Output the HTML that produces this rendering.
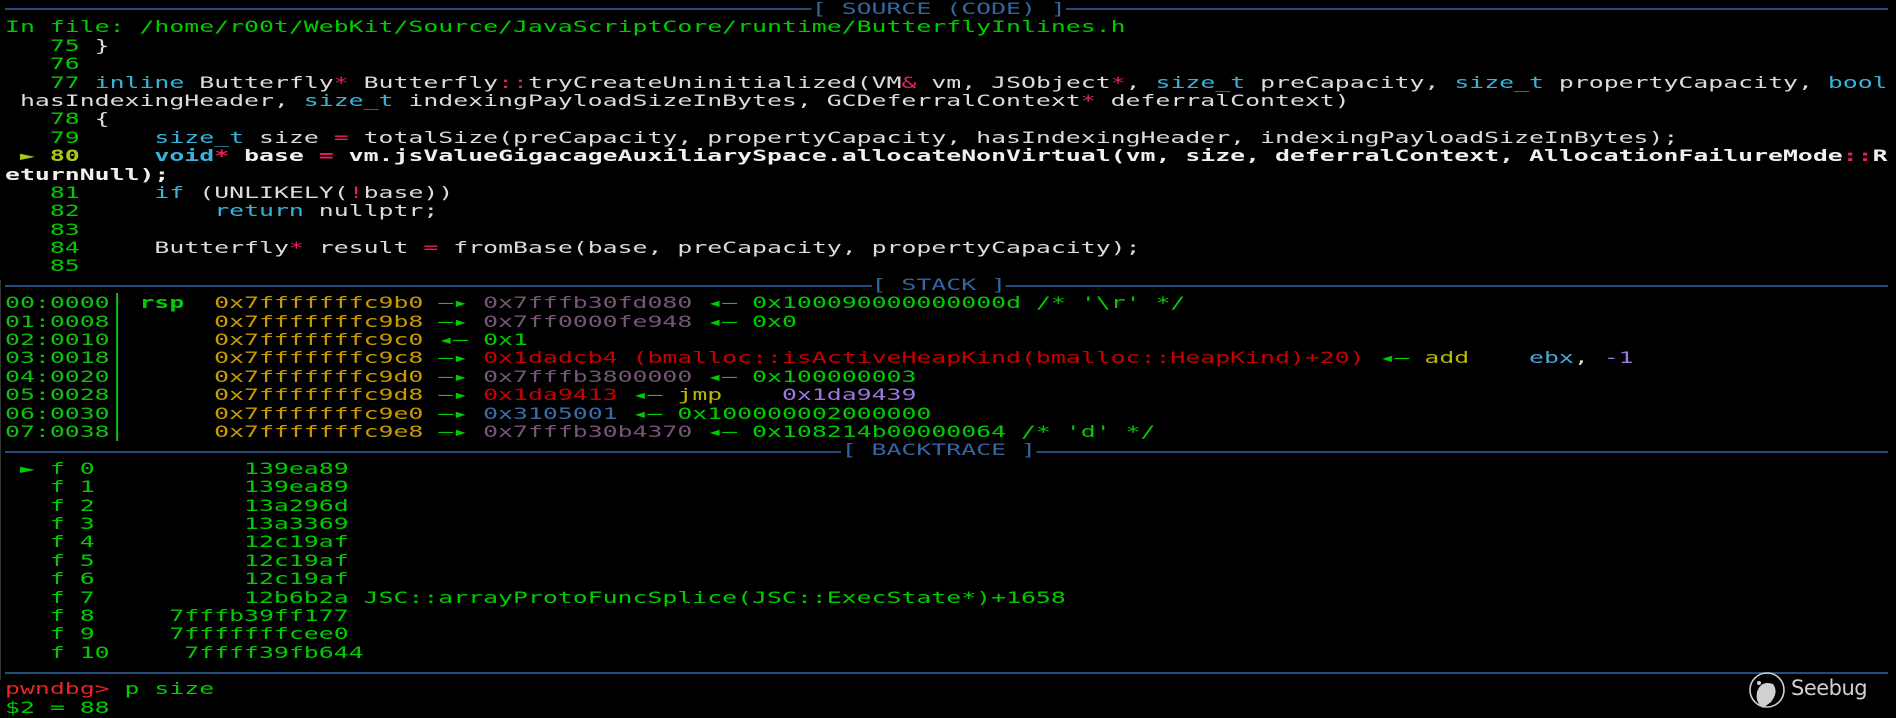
<!DOCTYPE html>
<html><head><meta charset="utf-8">
<style>
html,body{margin:0;padding:0;background:#000;}
body{width:1896px;height:718px;overflow:hidden;position:relative;}
.hl{position:absolute;left:5px;width:1883px;height:2px;background:#284a78;}
#w{position:absolute;left:5px;top:0;transform:scaleX(1.551);transform-origin:0 0;font-family:"DejaVu Sans Mono","Liberation Mono",monospace;font-size:16px;color:#dcdcdc;z-index:2;}
.r{height:18.4px;line-height:18.4px;white-space:pre;}
.lab{background:#000;color:#3565a0;}
.g{color:#00cc00}.gn{color:#10c010}.c{color:#38b4dc}.p{color:#e8205a}.y{color:#a8c818}
.b{font-weight:bold;color:#f0f0f0}
.ad{color:#c89a00}.hp{color:#765676}.rd{color:#c80000}.yl{color:#b8b800}.lv{color:#9a78dc}.bl{color:#3a6ea8}.cy{color:#4aa8d8}
.pr{color:#ee2222}
</style></head><body>
<div class="hl" style="top:8.2px"></div>
<div class="hl" style="top:285.2px"></div>
<div class="hl" style="top:450.8px"></div>
<div class="hl" style="top:671.6px"></div>
<div style="position:absolute;left:0;top:280px;width:1px;height:400px;background:#333"></div>
<div id="w">
<div class="r">                                                      <span class="lab">[ SOURCE (CODE) ]</span></div>
<div class="r g">In file: /home/r00t/WebKit/Source/JavaScriptCore/runtime/ButterflyInlines.h</div>
<div class="r"><span class="g">   75</span> }</div>
<div class="r"><span class="g">   76</span></div>
<div class="r"><span class="g">   77</span> <span class="c">inline</span> Butterfly<span class="p">*</span> Butterfly<span class="p">::</span>tryCreateUninitialized(VM<span class="p">&amp;</span> vm, JSObject<span class="p">*</span>, <span class="c">size_t</span> preCapacity, <span class="c">size_t</span> propertyCapacity, <span class="c">bool</span></div>
<div class="r"> hasIndexingHeader, <span class="c">size_t</span> indexingPayloadSizeInBytes, GCDeferralContext<span class="p">*</span> deferralContext)</div>
<div class="r"><span class="g">   78</span> {</div>
<div class="r"><span class="g">   79</span>     <span class="c">size_t</span> size <span class="p">=</span> totalSize(preCapacity, propertyCapacity, hasIndexingHeader, indexingPayloadSizeInBytes);</div>
<div class="r b"><span class="y"> ► 80</span>     <span class="c">void</span><span class="p">*</span> base <span class="p">=</span> vm.jsValueGigacageAuxiliarySpace.allocateNonVirtual(vm, size, deferralContext, AllocationFailureMode<span class="p">::</span>R</div>
<div class="r b">eturnNull);</div>
<div class="r"><span class="g">   81</span>     <span class="c">if</span> (UNLIKELY(<span class="p">!</span>base))</div>
<div class="r"><span class="g">   82</span>         <span class="c">return</span> nullptr;</div>
<div class="r"><span class="g">   83</span></div>
<div class="r"><span class="g">   84</span>     Butterfly<span class="p">*</span> result <span class="p">=</span> fromBase(base, preCapacity, propertyCapacity);</div>
<div class="r"><span class="g">   85</span></div>
<div class="r">                                                          <span class="lab">[ STACK ]</span></div>
<div class="r"><span class="gn">00:0000│</span> <b class="g">rsp</b>  <span class="ad">0x7fffffffc9b0</span> <span class="g">—▸</span> <span class="hp">0x7fffb30fd080</span> <span class="g">◂— 0x100090000000000d /* '\r' */</span></div>
<div class="r"><span class="gn">01:0008│</span>      <span class="ad">0x7fffffffc9b8</span> <span class="g">—▸</span> <span class="hp">0x7ff0000fe948</span> <span class="g">◂— 0x0</span></div>
<div class="r"><span class="gn">02:0010│</span>      <span class="ad">0x7fffffffc9c0</span> <span class="g">◂— 0x1</span></div>
<div class="r"><span class="gn">03:0018│</span>      <span class="ad">0x7fffffffc9c8</span> <span class="g">—▸</span> <span class="rd">0x1dadcb4 (bmalloc::isActiveHeapKind(bmalloc::HeapKind)+20)</span> <span class="g">◂—</span> <span class="yl">add</span>    <span class="cy">ebx</span>, <span class="lv">-1</span></div>
<div class="r"><span class="gn">04:0020│</span>      <span class="ad">0x7fffffffc9d0</span> <span class="g">—▸</span> <span class="hp">0x7fffb3800000</span> <span class="g">◂— 0x100000003</span></div>
<div class="r"><span class="gn">05:0028│</span>      <span class="ad">0x7fffffffc9d8</span> <span class="g">—▸</span> <span class="rd">0x1da9413</span> <span class="g">◂—</span> <span class="yl">jmp</span>    <span class="lv">0x1da9439</span></div>
<div class="r"><span class="gn">06:0030│</span>      <span class="ad">0x7fffffffc9e0</span> <span class="g">—▸</span> <span class="bl">0x3105001</span> <span class="g">◂— 0x100000002000000</span></div>
<div class="r"><span class="gn">07:0038│</span>      <span class="ad">0x7fffffffc9e8</span> <span class="g">—▸</span> <span class="hp">0x7fffb30b4370</span> <span class="g">◂— 0x108214b00000064 /* 'd' */</span></div>
<div class="r">                                                        <span class="lab">[ BACKTRACE ]</span></div>
<div class="r g"> ► f 0          139ea89</div>
<div class="r g">   f 1          139ea89</div>
<div class="r g">   f 2          13a296d</div>
<div class="r g">   f 3          13a3369</div>
<div class="r g">   f 4          12c19af</div>
<div class="r g">   f 5          12c19af</div>
<div class="r g">   f 6          12c19af</div>
<div class="r g">   f 7          12b6b2a JSC::arrayProtoFuncSplice(JSC::ExecState*)+1658</div>
<div class="r g">   f 8     7fffb39ff177</div>
<div class="r g">   f 9     7fffffffcee0</div>
<div class="r g">   f 10     7ffff39fb644</div>
<div class="r"> </div>
<div class="r"><span class="pr">pwndbg&gt;</span> <span class="g">p size</span></div>
<div class="r g">$2 = 88</div>
</div>
<svg style="position:absolute;left:1747px;top:670px" width="40" height="42" viewBox="0 0 40 42">
<circle cx="20" cy="20" r="17" fill="none" stroke="#d0d0d0" stroke-width="1.6"/>
<path d="M10 22 Q14 10 26 14 Q32 22 24 32 L16 38 Q8 32 10 22Z" fill="#d0d0d0"/>
<circle cx="12" cy="13" r="2" fill="#d0d0d0"/>
</svg>
<div style="position:absolute;left:1791px;top:676px;font-family:'DejaVu Sans','Liberation Sans',sans-serif;font-size:21px;color:#d0d0d0;letter-spacing:-0.5px">Seebug</div>
</body></html>
